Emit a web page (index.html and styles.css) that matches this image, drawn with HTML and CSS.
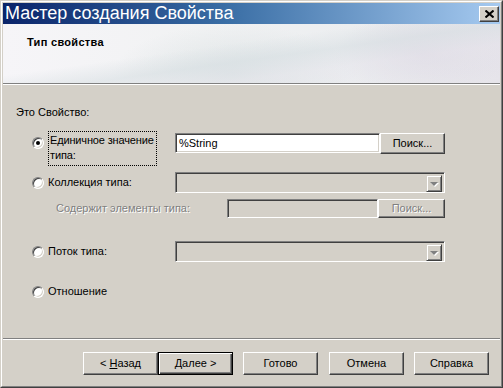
FILE: index.html
```html
<!DOCTYPE html>
<html lang="ru">
<head>
<meta charset="utf-8">
<title>Мастер создания Свойства</title>
<link rel="stylesheet" href="styles.css">
</head>
<body>
<div class="window">
  <div class="frame">
    <div class="titlebar">
      <span class="title">Мастер создания Свойства</span>
      <span class="close-btn">
        <svg width="9" height="8" viewBox="0 0 9 8"><path d="M0.5 0.5 L8.5 7.5 M8.5 0.5 L0.5 7.5" stroke="#000" stroke-width="2"/></svg>
      </span>
    </div>
    <div class="header">
      <div class="header-title">Тип свойства</div>
    </div>
    <div class="sep"></div>
    <div class="content">
      <div class="caption">Это Свойство:</div>

      <div class="row row-single">
        <span class="radio checked"><span class="dot"></span></span>
        <span class="label focus">Единичное значение<br>типа:</span>
        <span class="textbox">%String</span>
        <span class="btn small">Поиск...</span>
      </div>

      <div class="row row-collection">
        <span class="radio"></span>
        <span class="label">Коллекция типа:</span>
        <span class="combo"><span class="combo-arrow"><span class="tri"></span></span></span>
      </div>

      <div class="row row-contains">
        <span class="label disabled sub">Содержит элементы типа:</span>
        <span class="textbox disabled-box"></span>
        <span class="btn small disabled">Поиск...</span>
      </div>

      <div class="row row-stream">
        <span class="radio"></span>
        <span class="label">Поток типа:</span>
        <span class="combo"><span class="combo-arrow"><span class="tri"></span></span></span>
      </div>

      <div class="row row-relation">
        <span class="radio"></span>
        <span class="label">Отношение</span>
      </div>
    </div>
    <div class="sep"></div>
    <div class="footer">
      <span class="btn wide"><span>&lt; <u>Н</u>азад</span></span>
      <span class="btn wide default"><span><u>Д</u>алее &gt;</span></span>
      <span class="btn wide gap10">Готово</span>
      <span class="btn wide gap11">Отмена</span>
      <span class="btn wide gap10">Справка</span>
    </div>
  </div>
</div>
</body>
</html>
```

FILE: styles.css
```css
* { box-sizing: border-box; }

body {
  margin: 0;
  background: #d4d0c8;
  font-family: "Liberation Sans", Arial, sans-serif;
  font-size: 11px;
  color: #000;
}

.window {
  width: 503px;
  height: 388px;
  border: 1px solid;
  border-color: #d4d0c8 #404040 #404040 #d4d0c8;
}

.frame {
  height: 100%;
  border: 1px solid;
  border-color: #fff #808080 #808080 #fff;
  padding: 1px;
  background: #d4d0c8;
  display: flex;
  flex-direction: column;
}

.titlebar {
  height: 21px;
  flex: none;
  display: flex;
  align-items: center;
  padding: 0 1px 0 2px;
  background: linear-gradient(to right, #0a246a 0%, #3a6ea5 45%, #a6caf0 100%);
}

.title {
  flex: 1;
  color: #fff;
  font-size: 18px;
  line-height: 21px;
  white-space: nowrap;
}

.close-btn {
  width: 20px;
  height: 16px;
  display: flex;
  align-items: center;
  justify-content: center;
  background: #d4d0c8;
  border: 1px solid;
  border-color: #fff #404040 #404040 #fff;
  box-shadow: inset -1px -1px #808080;
}

.header {
  height: 59px;
  flex: none;
  padding: 12px 0 0 24px;
  background:
    linear-gradient(172deg, rgba(255,255,255,0) 0%, rgba(255,255,255,0) 40%, rgba(214,222,226,0.55) 55%, rgba(230,228,236,0.4) 70%, rgba(255,255,255,0) 100%),
    radial-gradient(ellipse 120px 50px at 230px 50px, rgba(200,212,214,0.45), rgba(255,255,255,0) 100%),
    radial-gradient(ellipse 90px 40px at 420px 30px, rgba(215,210,222,0.5), rgba(255,255,255,0) 100%),
    linear-gradient(to right, #f6f5f8 0%, #f1f2f3 40%, #eceef0 70%, #e6e4ea 100%);
}

.header-title {
  font-weight: bold;
  line-height: 13px;
  letter-spacing: 0.3px;
}

.sep {
  height: 2px;
  flex: none;
  border-top: 1px solid #808080;
  border-bottom: 1px solid #fff;
}

.content {
  flex: 1;
  padding: 21px 0 0 13px;
}

.caption {
  line-height: 13px;
  margin-bottom: 12px;
}

.row {
  display: flex;
  align-items: center;
  padding-left: 16px;
}

.radio {
  width: 12px;
  height: 12px;
  flex: none;
  border-radius: 50%;
  background: #fff;
  border: 1px solid;
  border-color: #808080 #fff #fff #808080;
  box-shadow: inset 1px 1px #404040, inset -1px -1px #d4d0c8;
  display: flex;
  align-items: center;
  justify-content: center;
}

.dot {
  width: 4px;
  height: 4px;
  border-radius: 50%;
  background: #000;
}

.label {
  width: 127px;
  flex: none;
  margin-left: 4px;
  line-height: 15px;
  white-space: nowrap;
}

.label.focus {
  width: 109px;
  margin-right: 18px;
  letter-spacing: -0.15px;
  border: 1px dotted #000;
  padding: 1px 0 2px 1px;
  line-height: 15px;
}

.row-single {
  align-items: flex-start;
}

.row-single .radio { margin-top: 6px; }
.row-single .textbox,
.row-single .btn { margin-top: 2px; }

.textbox {
  width: 205px;
  height: 20px;
  flex: none;
  background: #fff;
  border: 1px solid;
  border-color: #808080 #fff #fff #808080;
  box-shadow: inset 1px 1px #404040, inset -1px -1px #d4d0c8;
  padding: 3px 0 0 3px;
  line-height: 13px;
}

.btn {
  display: flex;
  align-items: center;
  justify-content: center;
  flex: none;
  background: #d4d0c8;
  border: 1px solid;
  border-color: #fff #404040 #404040 #fff;
  box-shadow: inset -1px -1px #808080;
  line-height: 13px;
}

.btn.small {
  width: 65px;
  height: 21px;
}

.btn.disabled,
.label.disabled {
  color: #808080;
  text-shadow: 1px 1px 0 #fff;
}

.row-collection {
  margin-top: 6px;
}

.combo {
  width: 270px;
  height: 21px;
  flex: none;
  border: 1px solid;
  border-color: #808080 #fff #fff #808080;
  box-shadow: inset 1px 1px #404040, inset -1px -1px #d4d0c8;
  padding: 2px;
  display: flex;
  justify-content: flex-end;
  background: #d4d0c8;
}

.combo-arrow {
  width: 16px;
  height: 17px;
  border: 1px solid;
  border-color: #d4d0c8 #404040 #404040 #d4d0c8;
  box-shadow: inset 1px 1px #fff, inset -1px -1px #808080;
  display: flex;
  align-items: center;
  justify-content: center;
}

.tri {
  width: 0;
  height: 0;
  border-left: 4px solid transparent;
  border-right: 4px solid transparent;
  border-top: 4px solid #808080;
  filter: drop-shadow(1px 1px 0 #fff);
}

.row-contains {
  margin-top: 6px;
  padding-left: 37px;
}

.label.sub {
  width: 171px;
  margin-left: 3px;
}

.disabled-box {
  width: 151px;
  height: 19px;
  background: #d4d0c8;
}

.row-contains .btn.small {
  width: 67px;
  height: 19px;
}

.row-stream {
  margin-top: 23px;
}

.row-relation {
  margin-top: 22px;
}

.footer {
  flex: none;
  height: 45px;
  display: flex;
  justify-content: flex-end;
  padding: 12px 11px 0 0;
}

.btn.wide {
  width: 75px;
  height: 23px;
}

.btn.default {
  border: 1px solid #000;
  box-shadow: inset 1px 1px #fff, inset -1px -1px #404040, inset -2px -2px #808080;
}

.gap10 { margin-left: 10px; }
.gap11 { margin-left: 11px; }

u { text-decoration: underline; text-underline-offset: 1px; }
```
